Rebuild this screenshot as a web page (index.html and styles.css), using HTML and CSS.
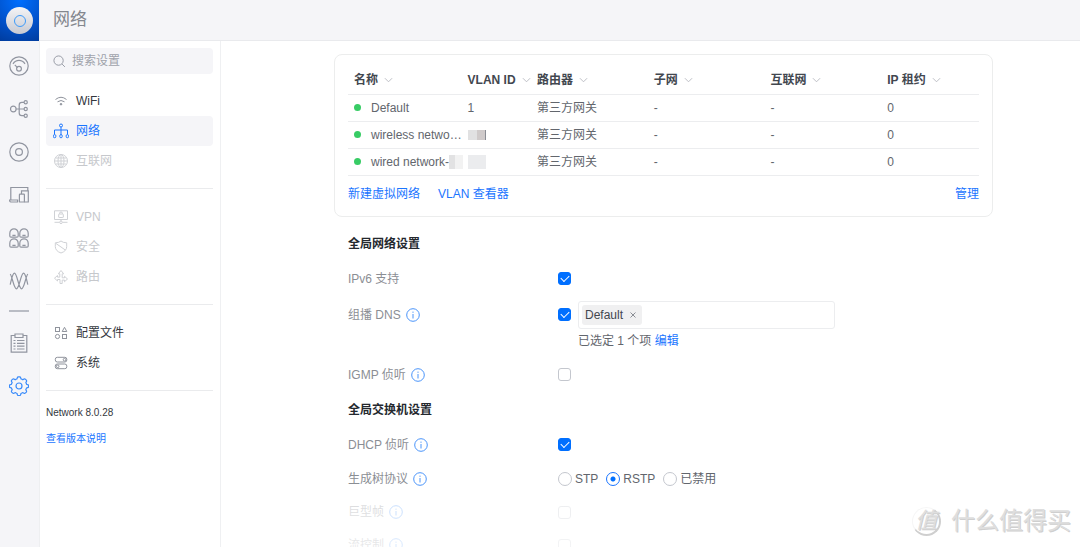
FILE: index.html
```html
<!DOCTYPE html>
<html lang="zh-CN">
<head>
<meta charset="utf-8">
<title>网络</title>
<link rel="stylesheet" href="styles.css">
</head>
<body>
<div class="app">
  <nav class="rail" aria-label="主导航">
    <a class="logo" href="#" aria-label="主页"><span class="logo-disc"><span class="logo-ring"></span></span></a>
    <div class="rail-items">
      <a class="rail-item" href="#" aria-label="仪表板"><svg viewBox="0 0 20 20"><circle cx="10" cy="10" r="9.2"/><path d="M4 7.8C7 3.2 13 3.2 16 7.8M5.8 8.8l2.6 2.8"/><circle cx="10" cy="12.8" r="2.4"/></svg></a>
      <a class="rail-item" href="#" aria-label="拓扑"><svg viewBox="0 0 20 20"><circle cx="4.3" cy="10" r="2.8"/><path d="M7.1 10h8M15 3.3h-2.2q-2.6 0-2.6 2.6v8.2q0 2.6 2.6 2.6H15"/><circle cx="16.7" cy="3.3" r="1.6"/><circle cx="16.7" cy="10" r="1.6"/><circle cx="16.7" cy="16.7" r="1.6"/></svg></a>
      <a class="rail-item" href="#" aria-label="设备"><svg viewBox="0 0 20 20"><circle cx="10" cy="10" r="9.2"/><circle cx="10" cy="10" r="3.4"/></svg></a>
      <a class="rail-item" href="#" aria-label="客户端"><svg viewBox="0 0 20 20"><path d="M1.8 14.5V2.5h17v3M.6 15h8v2H1.8Q.6 17 .6 15zM12.5 9V5.8h6.8V17h-4"/><rect x="10.4" y="9.2" width="5" height="7.8" rx=".6"/></svg></a>
      <a class="rail-item" href="#" aria-label="端口"><svg viewBox="0 0 20 20"><path d="M.8 8V5.200C.8 2.500 2.800.8 5 .8s4.200 1.700 4.200 4.400V8q0 1.200-1.200 1.200H2Q.8 9.200.8 8zM10.800 8V5.200c0-2.700 2-4.400 4.200-4.400s4.200 1.700 4.200 4.400V8q0 1.200-1.200 1.200h-6q-1.200 0-1.200-1.200zM.8 18v-2.800c0-2.700 2-4.400 4.200-4.400s4.200 1.700 4.200 4.400V18q0 1.200-1.200 1.200H2Q.8 19.200.8 18zM10.800 18v-2.800c0-2.700 2-4.400 4.200-4.400s4.200 1.700 4.200 4.400V18q0 1.200-1.200 1.200h-6q-1.200 0-1.200-1.200zM3.400 7.300h3.200M13.400 7.300h3.200M3.400 17.300h3.200M13.400 17.300h3.200"/></svg></a>
      <a class="rail-item" href="#" aria-label="无线电"><svg viewBox="0 0 20 20"><path d="M1.200 3C3.500 6 4.800 17.800 7.500 17.800S12 2.200 14.500 2.200c2 0 3 6 4.300 11.500M1.200 13.700C2.500 8.200 3.500 2.200 5.500 2.200c2.500 0 4.300 15.600 7 15.600S16.500 6 18.800 3"/></svg></a>
      <hr class="rail-line">
      <a class="rail-item" href="#" aria-label="日志"><svg viewBox="0 0 20 20"><path d="M6 2.500H2.200v16.700h15.600V2.500H14M6 1h8v3.500H6zM4.500 7.500h2M8 7.500h7.500M4.500 10.300h2M8 10.300h7.500M4.500 13.100h2M8 13.100h7.500M4.500 16h2M8 16h7.500"/></svg></a>
      <a class="rail-item rail-active" href="#" aria-label="设置"><svg viewBox="0 0 20 20"><path d="M8.300 1.800q.2-1 1-1h1.400q.8 0 1 1l.3 1q1.100.3 1.900.9l1-.6q.9-.4 1.400.1l1 1q.6.600.1 1.400l-.5 1q.5.900.7 1.700l1 .3q1 .2 1 1v1q0 .8-1 1l-1 .3q-.3 1-.8 1.800l.6 1q.4.800-.1 1.400l-1 1q-.6.500-1.400.1l-1-.6q-.9.600-1.900.9l-.3 1q-.2 1-1 1H9.300q-.8 0-1-1l-.3-1q-1-.300-1.900-.9l-1 .6q-.8.400-1.400-.1l-1-1q-.5-.6-.1-1.400l.6-1q-.500-.800-.8-1.800l-1-.3q-1-.2-1-1v-1q0-.8 1-1l1-.3q.200-.800.7-1.700l-.5-1q-.5-.8.1-1.400l1-1q.5-.5 1.400-.1l1 .6q.8-.6 1.900-.9z"/><circle cx="10" cy="10" r="3"/></svg></a>
    </div>
  </nav>
  <div class="page">
    <header class="topbar"><h1>网络</h1></header>
    <div class="body">
      <aside class="side">
        <label class="search"><svg viewBox="0 0 14 14"><circle cx="6" cy="6" r="5"/><path d="M9.800 9.800l3 3"/></svg><input type="text" placeholder="搜索设置" aria-label="搜索设置"></label>
        <nav class="menu">
          <a class="item" href="#"><svg viewBox="0 0 16 16"><path d="M2.500 6.500q5.500-4.500 11 0M4.500 8.800q3.500-2.600 7 0"/><circle cx="8" cy="11.200" r=".8" fill="currentColor"/></svg>WiFi</a>
          <a class="item selected" href="#"><svg viewBox="0 0 16 16"><circle cx="8" cy="2.500" r="1.500"/><path d="M8 4v8M1.500 11.500V7h13v4.500"/><rect x=".4" y="11.700" width="2.400" height="3" rx="1"/><rect x="6.800" y="11.700" width="2.400" height="3" rx="1"/><rect x="13.200" y="11.700" width="2.400" height="3" rx="1"/></svg>网络</a>
          <a class="item disabled" aria-disabled="true"><svg viewBox="0 0 16 16"><circle cx="8" cy="8" r="6.500"/><ellipse cx="8" cy="8" rx="3" ry="6.500"/><path d="M8 1.500v13M2.500 5h11M1.500 8h13M2.500 11h11"/></svg>互联网</a>
          <hr>
          <a class="item disabled" aria-disabled="true"><svg viewBox="0 0 16 16"><path d="M1.500 1.800h13v8.700h-13zM8 10.500V12M1.500 13.300h5M9.500 13.300h5M6.500 5V4.500a1.500 1.500 0 013 0V5"/><rect x="5.700" y="5" width="4.600" height="3.500" rx=".5"/><circle cx="8" cy="13.300" r="1.300"/></svg>VPN</a>
          <a class="item disabled" aria-disabled="true"><svg viewBox="0 0 16 16"><path d="M8 2Q10 3.800 13.700 3.800v3.700Q13.700 12 8 14 2.300 12 2.300 7.500V3.800Q6 3.800 8 2zM3 4.500l9.300 6.500"/></svg>安全</a>
          <a class="item disabled" aria-disabled="true"><svg viewBox="0 0 16 16"><path d="M7 14.500V10.500H4.500V12L1.500 9.200l3-2.700v1.600H6.800V4.800H5.300L8 1.500l2.700 3.300H9.200v4h2.300V7.300l3 2.700-3 2.700v-1.600H9.200v3.400z"/></svg>路由</a>
          <hr>
          <a class="item" href="#"><svg viewBox="0 0 16 16"><rect x="2.500" y="2.500" width="4" height="4"/><path d="M11.500 2.300l2.300 4.200H9.200z"/><circle cx="4.500" cy="11.500" r="2.100"/><rect x="9.500" y="9.500" width="4" height="4"/></svg>配置文件</a>
          <a class="item" href="#"><svg viewBox="0 0 16 16"><rect x="2.300" y="2.300" width="11.500" height="4.700" rx="2"/><circle cx="11.500" cy="4.700" r="1.300"/><rect x="2.300" y="9" width="11.500" height="4.700" rx="2"/><circle cx="4.700" cy="11.300" r="1.300"/></svg>系统</a>
          <hr>
        </nav>
        <div class="version"><span>Network 8.0.28</span><a href="#">查看版本说明</a></div>
      </aside>
      <main class="main">
        <section class="card">
          <table class="networks">
            <colgroup><col class="c-name"><col class="c-vlan"><col class="c-mid"><col class="c-mid"><col class="c-mid"><col></colgroup>
            <thead><tr>
              <th>名称<svg class="chev" viewBox="0 0 10 6"><path d="M1 1l4 4 4-4"/></svg></th>
              <th>VLAN ID<svg class="chev" viewBox="0 0 10 6"><path d="M1 1l4 4 4-4"/></svg></th>
              <th>路由器<svg class="chev" viewBox="0 0 10 6"><path d="M1 1l4 4 4-4"/></svg></th>
              <th>子网<svg class="chev" viewBox="0 0 10 6"><path d="M1 1l4 4 4-4"/></svg></th>
              <th>互联网<svg class="chev" viewBox="0 0 10 6"><path d="M1 1l4 4 4-4"/></svg></th>
              <th>IP 租约<svg class="chev" viewBox="0 0 10 6"><path d="M1 1l4 4 4-4"/></svg></th>
            </tr></thead>
            <tbody>
              <tr><td><div class="name"><i class="dot"></i><span>Default</span></div></td><td>1</td><td>第三方网关</td><td>-</td><td>-</td><td>0</td></tr>
              <tr><td><div class="name"><i class="dot"></i><span>wireless netwo…</span></div></td><td><div class="masked"><i class="mask"></i><i class="mask mask-dark"></i></div></td><td>第三方网关</td><td>-</td><td>-</td><td>0</td></tr>
              <tr><td><div class="name"><i class="dot"></i><span>wired network-</span><i class="veil"></i></div></td><td><div class="masked"><i class="mask mask-light"></i><i class="mask mask-light"></i></div></td><td>第三方网关</td><td>-</td><td>-</td><td>0</td></tr>
            </tbody>
          </table>
          <div class="links"><a href="#">新建虚拟网络</a><a href="#">VLAN 查看器</a><a class="manage" href="#">管理</a></div>
        </section>
        <form class="settings">
          <h2>全局网络设置</h2>
          <div class="row tall"><label for="ipv6">IPv6 支持</label><input id="ipv6" type="checkbox" checked></div>
          <div class="row multi">
            <label for="mdns">组播 DNS<svg class="info" viewBox="0 0 14 14"><circle cx="7" cy="7" r="6.300"/><path d="M7 6v4.500M7 3.600v1.200"/></svg></label>
            <input id="mdns" type="checkbox" checked>
            <div class="field">
              <div class="tags"><span class="tag">Default<button type="button" aria-label="移除 Default"><svg viewBox="0 0 6 6"><path d="M.5.5l5 5M5.500.5l-5 5"/></svg></button></span></div>
              <p class="hint">已选定 1 个项 <a href="#">编辑</a></p>
            </div>
          </div>
          <div class="row tall"><label for="igmp">IGMP 侦听<svg class="info" viewBox="0 0 14 14"><circle cx="7" cy="7" r="6.300"/><path d="M7 6v4.500M7 3.600v1.200"/></svg></label><input id="igmp" type="checkbox"></div>
          <h2>全局交换机设置</h2>
          <div class="row tall"><label for="dhcp">DHCP 侦听<svg class="info" viewBox="0 0 14 14"><circle cx="7" cy="7" r="6.300"/><path d="M7 6v4.500M7 3.600v1.200"/></svg></label><input id="dhcp" type="checkbox" checked></div>
          <div class="row" role="radiogroup" aria-labelledby="stp-title">
            <span class="title" id="stp-title">生成树协议<svg class="info" viewBox="0 0 14 14"><circle cx="7" cy="7" r="6.300"/><path d="M7 6v4.500M7 3.600v1.200"/></svg></span>
            <div class="radios">
              <label><input type="radio" name="stp">STP</label>
              <label><input type="radio" name="stp" checked>RSTP</label>
              <label><input type="radio" name="stp">已禁用</label>
            </div>
          </div>
          <div class="row"><label for="jumbo">巨型帧<svg class="info" viewBox="0 0 14 14"><circle cx="7" cy="7" r="6.300"/><path d="M7 6v4.500M7 3.600v1.200"/></svg></label><input id="jumbo" type="checkbox"></div>
          <div class="row"><label for="flow">流控制<svg class="info" viewBox="0 0 14 14"><circle cx="7" cy="7" r="6.300"/><path d="M7 6v4.500M7 3.600v1.200"/></svg></label><input id="flow" type="checkbox"></div>
        </form>
        <div class="fade"></div>
        <div class="brand"><span class="brand-seal">值</span><span>什么值得买</span></div>
      </main>
    </div>
  </div>
</div>
</body>
</html>
```

FILE: styles.css
```css
* { box-sizing: border-box; }

body {
  margin: 0;
  font-family: "Liberation Sans", "Noto Sans CJK SC", sans-serif;
  font-size: 12px;
  line-height: 16px;
  color: #50565e;
  background: #fff;
}

a { color: #1a75ff; text-decoration: none; }
svg { fill: none; stroke: currentColor; flex: none; }
input, button { font: inherit; margin: 0; }
hr { border: 0; margin: 0; }

.app { display: flex; height: 100vh; overflow: hidden; }

/* Icon rail */
.rail { width: 40px; flex: none; background: #f5f5f8; border-right: 1px solid #eeeff1; }
.logo {
  display: grid;
  place-items: center;
  width: 39px;
  height: 41px;
  background: radial-gradient(circle at 50% 0, #006fff, #0050c8 60%, #003c9e);
}
.logo-disc {
  display: grid;
  place-items: center;
  width: 27px;
  height: 27px;
  border-radius: 50%;
  background: linear-gradient(#f4f4f6, #c8cad2);
}
.logo-ring { width: 12px; height: 12px; border: 1px solid #3d9bfa; border-radius: 50%; }
.rail-items { padding-top: 3px; }
.rail-item { display: grid; place-items: center; width: 38px; height: 43px; color: #9195a0; }
.rail-item svg { width: 20px; height: 20px; stroke-width: 1.2; }
.rail-active { color: #3a8bfa; }
.rail-line { height: 2px; width: 20px; margin: 8px 9px 9px; background: #b9bcc4; }

/* Page frame */
.page { flex: 1; min-width: 0; display: flex; flex-direction: column; }
.topbar {
  display: flex;
  align-items: center;
  height: 41px;
  flex: none;
  padding-left: 13px;
  background: #f5f5f8;
  border-bottom: 1px solid #e9eaed;
}
.topbar h1 { margin: 0; font-size: 17px; line-height: 24px; font-weight: 400; color: #84878e; }
.body { flex: 1; min-height: 0; display: flex; }

/* Settings sidebar */
.side { width: 181px; flex: none; padding: 7px 7px 0 6px; border-right: 1px solid #eff0f2; }
.search {
  display: flex;
  align-items: center;
  gap: 6px;
  height: 26px;
  padding: 0 7px;
  border-radius: 4px;
  background: #f5f5f8;
  color: #9195a0;
}
.search svg { width: 13px; height: 13px; }
.search input { flex: 1; min-width: 0; padding: 0; border: 0; outline: 0; background: none; color: #50565e; }
.search input::placeholder { color: #a0a3ab; opacity: 1; }
.menu { padding-top: 12px; }
.menu hr { height: 1px; margin: 12px 0 13px; background: #eaebed; }
.item {
  display: flex;
  align-items: center;
  gap: 7px;
  height: 30px;
  padding-left: 7px;
  border-radius: 4px;
  color: #34383e;
}
.item svg { width: 16px; height: 16px; color: #8f939c; }
.selected, .selected svg { color: #1a75ff; }
.selected { background: #f5f5f8; }
.disabled { color: #c6c8cc; }
.disabled svg { color: #cfd1d5; }
.version { display: flex; flex-direction: column; gap: 11px; padding-top: 1px; font-size: 10px; line-height: 15px; color: #34383e; }

/* Main content */
.main { position: relative; flex: 1; min-width: 0; overflow: hidden; padding: 13px 87px 0 113px; }
.card { padding: 12px 13px 14px; border: 1px solid #eceded; border-radius: 8px; }
.networks { width: 100%; table-layout: fixed; border-collapse: collapse; }
.c-name { width: 18%; }
.c-vlan { width: 11%; }
.c-mid { width: 18.5%; }
.networks th, .networks td {
  height: 27px;
  padding: 0 0 0 6px;
  text-align: left;
  white-space: nowrap;
  border-bottom: 1px solid #ecedef;
}
.networks th { font-weight: 700; color: #42474f; }
.networks td { color: #62666d; }
.chev { width: 9px; height: 6px; margin-left: 6px; vertical-align: 1px; color: #b5b8be; }
.name { display: flex; align-items: center; }
.dot { width: 7px; height: 7px; flex: none; margin-right: 10px; border-radius: 50%; background: #38cc65; }
.veil { width: 14px; height: 14px; flex: none; background: linear-gradient(90deg, #e2e2e3 40%, #f2f2f2 40%); }
.masked { display: flex; align-items: center; }
.mask { width: 9px; height: 10px; background: #e1e1e2; }
.mask-dark { background: #cfcaca; border-right: 1px solid #8a8d94; }
.mask-light { height: 14px; background: #ebecee; }
.links { display: flex; gap: 18px; padding-top: 10px; }
.manage { margin-left: auto; }

.settings { padding: 10px 14px 0; }
.settings h2 { margin: 0; font-size: 12px; line-height: 34px; color: #24282e; }
.row { display: grid; grid-template-columns: 210px auto 1fr; align-items: center; height: 33px; color: #62666d; }
.tall { height: 36px; }
.multi { height: auto; padding: 4px 0; align-items: start; }
.row > label, .title { display: flex; align-items: center; gap: 5px; color: #8b8e94; }
.multi > label { height: 28px; }
.multi > input { margin-top: 7px; }
.info { width: 14px; height: 14px; color: #4a94fa; }

input[type="checkbox"], input[type="radio"] {
  appearance: none;
  width: 13px;
  height: 13px;
  border: 1px solid #c4c7ce;
  border-radius: 3px;
  background: #fff;
}
input[type="checkbox"]:checked {
  display: grid;
  place-items: center;
  border-color: #006fff;
  background: #006fff;
}
input[type="checkbox"]:checked::after {
  content: "";
  width: 7px;
  height: 4px;
  margin-bottom: 2px;
  border-left: 1px solid #fff;
  border-bottom: 1px solid #fff;
  transform: rotate(-45deg);
}
input[type="radio"] { width: 14px; height: 14px; border-radius: 50%; }
input[type="radio"]:checked { border-color: #1a75ff; background: radial-gradient(circle, #006fff 2px, #fff 3px); }
.radios { display: flex; gap: 8px; }
.radios label { display: flex; align-items: center; gap: 3px; }

.field { margin-left: 7px; }
.tags {
  display: flex;
  align-items: center;
  width: 257px;
  max-width: 100%;
  height: 28px;
  padding: 3px;
  border: 1px solid #ecedef;
  border-radius: 3px;
}
.tag {
  display: flex;
  align-items: center;
  gap: 7px;
  height: 20px;
  padding: 0 6px 0 3px;
  border-radius: 3px;
  background: #f0f0f1;
  color: #42474f;
}
.tag button { display: flex; padding: 0; border: 0; background: none; color: #8a8d94; }
.tag svg { width: 6px; height: 6px; }
.hint { margin: 0; line-height: 24px; }

.fade {
  position: absolute;
  left: 0;
  right: 0;
  bottom: 0;
  height: 60px;
  background: linear-gradient(rgba(255, 255, 255, 0), rgba(255, 255, 255, .7) 30%, rgba(255, 255, 255, .8));
}
.brand {
  position: absolute;
  right: 9px;
  bottom: 10px;
  display: flex;
  align-items: center;
  gap: 10px;
  font-size: 24px;
  line-height: 32px;
  color: #dedede;
  text-shadow: 1px 1px 0 #cfcfcf;
}
.brand-seal {
  display: grid;
  place-items: center;
  width: 29px;
  height: 29px;
  border: 1px solid #f6f6f6;
  border-right: 2px solid #cfcfcf;
  border-bottom: 2px solid #cfcfcf;
  border-radius: 50%;
  font-size: 22px;
  line-height: 26px;
  font-style: italic;
}
```
